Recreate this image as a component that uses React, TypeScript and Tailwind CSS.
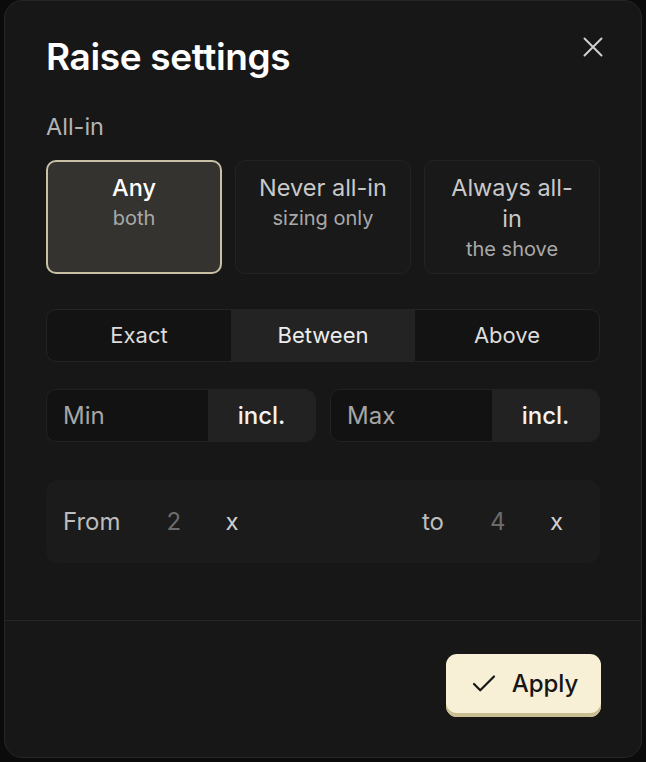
import { useState } from "react";
import { Check } from "lucide-react";

const ALL_IN_OPTIONS = [
  { value: "any", label: "Any", hint: "both" },
  { value: "never", label: "Never all-in", hint: "sizing only" },
  { value: "always", label: "Always all-in", hint: "the shove" },
];

const MODES = ["Exact", "Between", "Above"];

export default function App() {
  const [allIn, setAllIn] = useState("any");
  const [mode, setMode] = useState("Between");

  return (
    <div
      className="w-[646px] h-[762px] bg-[#0b0b0b] overflow-hidden"
      style={{ fontFamily: "Inter, 'Noto Sans', sans-serif" }}
    >
      <div className="ml-[4px] w-[638px] h-[758px] flex flex-col rounded-[18px] border border-[#262626] bg-[#171717]">
        <div className="flex-1 px-[41px] pt-[34px]">
          <div className="flex items-start justify-between">
            <h2 className="text-[37px] leading-[44px] font-semibold text-white tracking-[-0.01em]">
              Raise settings
            </h2>
            <button
              type="button"
              aria-label="Close"
              className="mt-[2px] -mr-[3px] text-[#cfcfcf]"
            >
              <svg width="20" height="20" viewBox="0 0 20 20" fill="none">
                <path
                  d="M1.5 1.5L18.5 18.5M18.5 1.5L1.5 18.5"
                  stroke="currentColor"
                  strokeWidth="2"
                  strokeLinecap="round"
                />
              </svg>
            </button>
          </div>

          <p className="mt-[33px] text-[23.5px] leading-[30px] text-[#b4b4b4]">All-in</p>

          {/* all-in choice cards */}
          <div className="mt-[18px] grid grid-cols-3 gap-[13px]">
            {ALL_IN_OPTIONS.map((o) => {
              const active = o.value === allIn;
              return (
                <button
                  key={o.value}
                  type="button"
                  onClick={() => setAllIn(o.value)}
                  className={
                    active
                      ? "h-[114px] rounded-[10px] border-2 border-[#c8c1a6] bg-[#35332f] px-5 pt-[10px] flex flex-col items-center text-center"
                      : "h-[114px] rounded-[10px] border border-[#232323] bg-[#191919] px-5 pt-[11px] flex flex-col items-center text-center"
                  }
                >
                  <span
                    className={
                      active
                        ? "text-[23.5px] leading-[31px] font-medium text-white"
                        : "text-[23.5px] leading-[31px] text-[#c9c9c9]"
                    }
                  >
                    {o.label}
                  </span>
                  <span className="text-[20px] leading-[31px] text-[#a9a9a9]">{o.hint}</span>
                </button>
              );
            })}
          </div>

          {/* mode segmented control */}
          <div className="mt-[35px] h-[53px] grid grid-cols-3 rounded-[10px] border border-[#242424] bg-[#131313] overflow-hidden">
            {MODES.map((m) => (
              <button
                key={m}
                type="button"
                onClick={() => setMode(m)}
                className={
                  m === mode
                    ? "bg-[#232323] text-[22px] text-[#ededed]"
                    : "text-[22px] text-[#dcdcdc]"
                }
              >
                {m}
              </button>
            ))}
          </div>

          {/* min / max bounds */}
          <div className="mt-[27px] grid grid-cols-2 gap-[14px]">
            {["Min", "Max"].map((b) => (
              <div
                key={b}
                className="h-[53px] flex rounded-[10px] border border-[#222] bg-[#121212] overflow-hidden"
              >
                <span className="flex-1 flex items-center pl-[16px] text-[24px] text-[#a6a6a6]">
                  {b}
                </span>
                <span className="w-[107px] flex items-center justify-center bg-[#222] text-[24px] font-medium text-[#f2f2f2]">
                  incl.
                </span>
              </div>
            ))}
          </div>

          {/* range inputs */}
          <div className="mt-[38px] h-[83px] flex items-center rounded-[12px] bg-[#1b1b1b] pl-[17px] pr-[37px] text-[24px]">
            <span className="text-[#bdbdbd]">From</span>
            <span className="ml-[46px] w-[59px] text-[#6b6b6b]">2</span>
            <span className="text-[#d0d0d0]">x</span>
            <span className="ml-auto text-[#bdbdbd]">to</span>
            <span className="ml-[46px] w-[60px] text-[#6b6b6b]">4</span>
            <span className="text-[#d0d0d0]">x</span>
          </div>
        </div>

        {/* footer */}
        <div className="h-[137px] border-t border-[#262626] flex items-start justify-end px-[40px] pt-[33px]">
          <button
            type="button"
            className="h-[63px] w-[155px] flex items-center justify-center gap-[13px] rounded-[11px] bg-[#f8f0d6] shadow-[0_-4px_0_0_#c9bd92_inset] pb-[3px] text-[#161616]"
          >
            <Check className="w-[30px] h-[30px]" strokeWidth={1.75} />
            <span className="text-[24px] font-medium">Apply</span>
          </button>
        </div>
      </div>
    </div>
  );
}
